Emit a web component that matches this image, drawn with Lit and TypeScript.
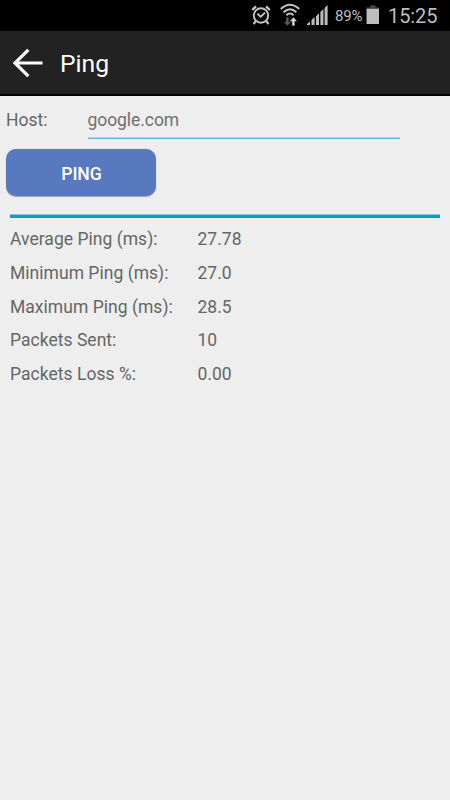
import { LitElement, html, css } from "lit";
import { customElement, state } from "lit/decorators.js";

@customElement("status-bar")
class StatusBar extends LitElement {
  static styles = css`
    :host { display: flex; align-items: center; justify-content: flex-end; height: 31px; background: #000; color: #bdbdbd; padding-right: 13px; }
    svg { display: block; flex: none; }
    .alarm { margin-bottom: 2px; }
    .wifi { margin: 0 0 1px 9px; }
    .signal { margin-left: 6px; }
    .percent { font-size: 15px; line-height: 31px; margin: 1px 0 0 7px; width: 28px; white-space: nowrap; letter-spacing: -0.2px; }
    .battery { margin: 0 0 2px 3px; }
    .clock { font-size: 20px; line-height: 31px; margin: 1px 0 0 8px; width: 49px; white-space: nowrap; letter-spacing: -0.1px; }
  `;
  render() {
    return html`
      <svg class="alarm" width="20" height="22" viewBox="0 0 20 22" fill="none" stroke="#c4c4c4">
        <circle cx="10" cy="11.5" r="7.2" stroke-width="2"></circle>
        <path d="M1.2 6 5 2.4M18.8 6 15 2.4" stroke-width="2.4"></path>
        <path d="M4.7 17.2 2.6 20M15.3 17.2 17.4 20" stroke-width="2.2"></path>
        <path d="M6.4 9.8 9.6 12.8 14 8.8" stroke-width="1.9"></path>
      </svg>
      <svg class="wifi" width="21" height="24" viewBox="0 0 21 24" fill="none" stroke="#c4c4c4">
        <path d="M.8 6Q10-2.4 19.2 6M3.6 9.2Q10 3.2 16.4 9.2M6.4 12.2Q10 8.8 13.6 12.2" stroke-width="2"></path>
        <path d="M6.2 14.2V18.8H3.8L7.4 22.8 11 18.8H8.6V14.2Z" fill="#5a5a5a" stroke="none"></path>
        <path d="M12.2 22.8V18.2H9.8L13.4 14.2 17 18.2H14.6V22.8Z" fill="#d2d2d2" stroke="none"></path>
      </svg>
      <svg class="signal" width="21" height="21" viewBox="0 0 21 21" fill="#bdbdbd">
        <path d="M0 20V19L3 16.4V20ZM4.5 20V15L7.6 12V20ZM9 20V11.3L12 8.3V20ZM13.4 20V7L16.4 4V20ZM17.6 20V3L20.6 0V20Z"></path>
      </svg>
      <span class="percent">89%</span>
      <svg class="battery" width="14" height="20" viewBox="0 0 14 20">
        <path d="M4.5 .5h5v2h-5z" fill="#555"></path>
        <path d="M.5 2.5h12.5v2H.5z" fill="#555"></path>
        <path d="M.5 4h12.5v15H.5z" fill="#bdbdbd"></path>
      </svg>
      <span class="clock">15:25</span>
    `;
  }
}

@customElement("app-root")
class AppRoot extends LitElement {
  @state() host = "google.com";
  @state() results: [string, string][] = [
    ["Average Ping (ms):", "27.78"],
    ["Minimum Ping (ms):", "27.0"],
    ["Maximum Ping (ms):", "28.5"],
    ["Packets Sent:", "10"],
    ["Packets Loss %:", "0.00"],
  ];
  static styles = css`
    :host { display: flex; flex-direction: column; height: 800px; background: #eee; font-family: Roboto, sans-serif; color: #666; font-size: 17.5px; overflow: hidden; }
    .bar { display: flex; align-items: center; height: 63px; background: #222; border-bottom: 2px solid #000; color: #fff; padding-left: 12px; box-sizing: content-box; }
    .back { display: block; width: 32px; height: 30px; }
    .title { font-size: 24.7px; line-height: 30px; margin: 3px 0 0 16px; font-weight: 400; }
    .form { display: flex; padding-left: 6px; height: 43px; }
    .label { width: 81.5px; line-height: 48px; }
    .field { width: 312.5px; height: 43px; line-height: 48px; border-bottom: 1px solid #5fb3d3; box-shadow: inset 0 -1px #b4d5e1; box-sizing: border-box; color: #707070; letter-spacing: -0.06px; }
    .ping { margin: 10px 0 0 6px; width: 150px; height: 47px; border: 0; border-radius: 10px; background: #5878c0; color: #fff; font: 500 17.6px/46px Roboto, sans-serif; padding: 2px 0 0 1px; box-shadow: 0 0.5px 1px #9ca3b5; }
    .rule { height: 3px; margin: 18px 10px 0; background: #0a9dcc; border-top: 1px solid #8fc6dc; }
    .results { display: grid; grid-template-columns: 187.5px 1fr; grid-auto-rows: 33.75px; line-height: 33.75px; padding-left: 10px; margin-top: 5px; letter-spacing: 0.03px; }
  `;
  render() {
    return html`
      <status-bar></status-bar>
      <div class="bar">
        <svg class="back" viewBox="0 0 32 30" fill="none" stroke="#fff" stroke-width="3.2">
          <path d="M16.3 1.8 3 15 16.3 28.2M3.5 15H30.5"></path>
        </svg>
        <div class="title">Ping</div>
      </div>
      <div class="form">
        <div class="label">Host:</div>
        <div class="field">${this.host}</div>
      </div>
      <button class="ping">PING</button>
      <div class="rule"></div>
      <div class="results">
        ${this.results.map(([k, v]) => html`<span>${k}</span><span>${v}</span>`)}
      </div>
    `;
  }
}
